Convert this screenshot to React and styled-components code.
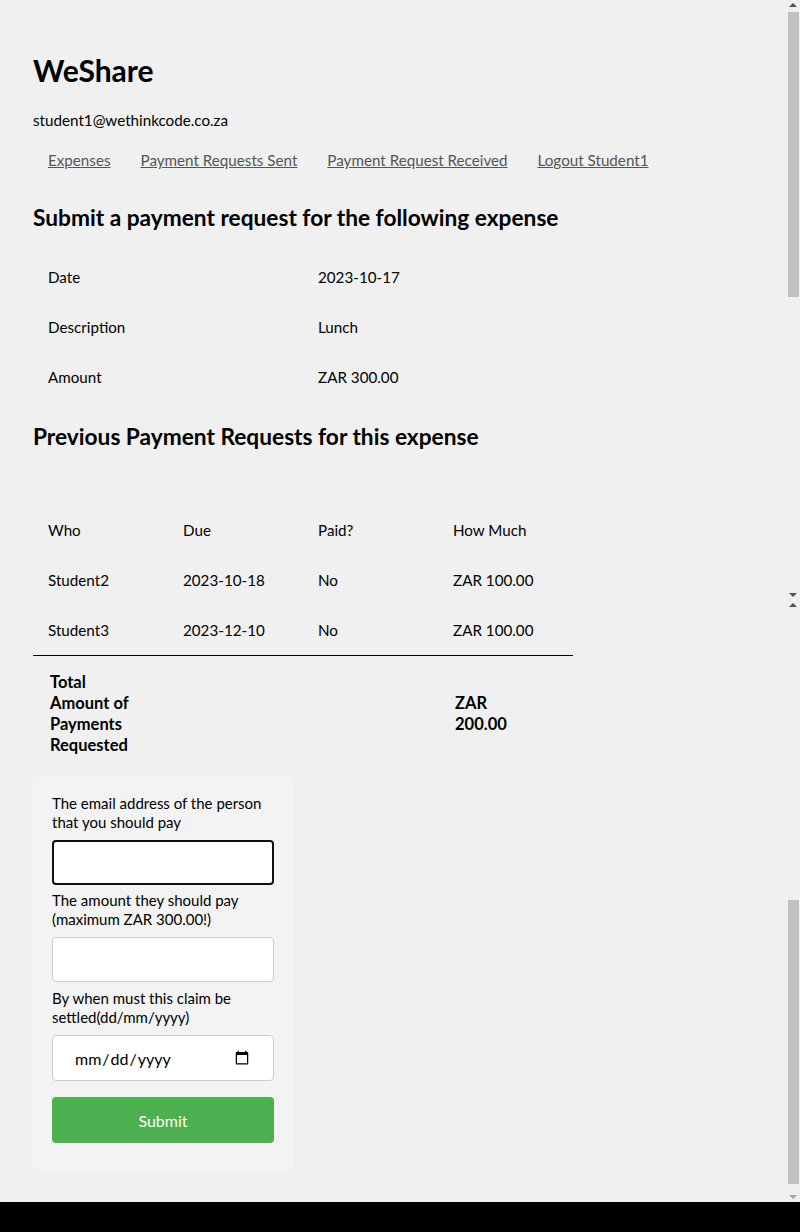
import React from 'react';
import styled, { createGlobalStyle } from 'styled-components';

const GlobalStyle = createGlobalStyle`
  html {
    background: #000;
  }
  body {
    margin: 0;
    font-family: Lato, "Noto Sans", sans-serif;
    color: #000;
  }
`;

const Page = styled.div`
  display: flex;
  height: 1202px;
  background: #f0f0f0;
`;

const Main = styled.main`
  flex: 1;
  padding: 0 33px;
`;

const Title = styled.h1`
  margin: 50px 0 20px;
  font-size: 30px;
  line-height: 40px;
  font-weight: 700;
`;

const UserEmail = styled.div`
  font-size: 15.2px;
  line-height: 20px;
  margin-bottom: 20px;
`;

const Nav = styled.nav`
  display: flex;
  margin-bottom: 33px;
`;

const NavLink = styled.a`
  padding: 0 15px;
  font-size: 15.2px;
  line-height: 20px;
  color: #555;
  text-decoration: underline;
`;

const Heading = styled.h2`
  margin: ${(p) => p.$top || '0'} 0 20px;
  font-size: 22.7px;
  line-height: 29px;
  font-weight: 700;
`;

const Table = styled.table`
  width: 540px;
  border-collapse: collapse;
  margin-top: ${(p) => p.$top || '0'};
  table-layout: fixed;

  td,
  th {
    padding: 15px;
    font-size: 15.2px;
    line-height: 20px;
    font-weight: 400;
    text-align: left;
    vertical-align: middle;
  }
`;

const FootRow = styled.tr`
  border-top: 1px solid #000;

  && td {
    padding: 16px 17px 15px;
    font-size: 16.5px;
    line-height: 21px;
    font-weight: 700;
  }
`;

const Wrap = styled.div`
  width: ${(p) => p.$w};
`;

const Card = styled.form`
  width: 262px;
  box-sizing: border-box;
  margin: 5px 0 0 -1px;
  padding: 18px 20px 28px;
  background: #f3f3f3;
  border-radius: 8px;
`;

const Label = styled.label`
  display: block;
  font-size: 15px;
  line-height: 19px;
  margin-bottom: 8px;
`;

const Input = styled.input`
  display: block;
  width: 100%;
  box-sizing: border-box;
  height: ${(p) => (p.type === 'date' ? '46px' : '45px')};
  margin-bottom: ${(p) => p.$mb || '6px'};
  padding: 0 ${(p) => (p.type === 'date' ? '21px' : '12px')};
  background: #fff;
  border: ${(p) => (p.$focused ? '2px solid #111' : '1px solid #ccc')};
  border-radius: 4px;
  font-family: inherit;
  font-size: 16px;
  color: #000;
  outline: none;
`;

const SubmitButton = styled.button`
  display: block;
  width: 100%;
  height: 46px;
  border: none;
  border-radius: 4px;
  background: #4caf50;
  color: #fff;
  font-family: inherit;
  font-size: 16px;
`;

const Rail = styled.div`
  width: 14px;
  display: flex;
  flex-direction: column;
`;

const RailPart = styled.div`
  height: ${(p) => p.$h}px;
  display: flex;
  flex-direction: column;
  align-items: center;
`;

const Arrow = styled.div`
  width: 0;
  height: 0;
  margin: 3px 0;
  border-left: 4px solid transparent;
  border-right: 4px solid transparent;
  ${(p) =>
    p.$up
      ? `border-bottom: 4px solid ${p.$dim ? '#a3a3a3' : '#505050'};`
      : `border-top: 4px solid ${p.$dim ? '#a3a3a3' : '#505050'};`}
`;

const Gap = styled.div`
  height: ${(p) => p.$h}px;
`;

const Thumb = styled.div`
  width: 11px;
  height: ${(p) => p.$h}px;
  background: #c1c1c1;
`;

const Fill = styled.div`
  flex: 1;
`;

const expense = [
  ['Date', '2023-10-17'],
  ['Description', 'Lunch'],
  ['Amount', 'ZAR 300.00'],
];

const requests = [
  ['Student2', '2023-10-18', 'No', 'ZAR 100.00'],
  ['Student3', '2023-12-10', 'No', 'ZAR 100.00'],
];

export default function App() {
  return (
    <>
      <GlobalStyle />
      <Page>
        <Main>
          <Title>WeShare</Title>
          <UserEmail>student1@wethinkcode.co.za</UserEmail>
          <Nav>
            <NavLink href="#">Expenses</NavLink>
            <NavLink href="#">Payment Requests Sent</NavLink>
            <NavLink href="#">Payment Request Received</NavLink>
            <NavLink href="#">Logout Student1</NavLink>
          </Nav>

          <Heading>Submit a payment request for the following expense</Heading>
          <Table>
            <tbody>
              {expense.map(([k, v]) => (
                <tr key={k}>
                  <td>{k}</td>
                  <td>{v}</td>
                </tr>
              ))}
            </tbody>
          </Table>

          <Heading $top="20px">Previous Payment Requests for this expense</Heading>
          <Table $top="54px">
            <thead>
              <tr>
                <th>Who</th>
                <th>Due</th>
                <th>Paid?</th>
                <th>How Much</th>
              </tr>
            </thead>
            <tbody>
              {requests.map((r) => (
                <tr key={r[0]}>
                  {r.map((c, i) => (
                    <td key={i}>{c}</td>
                  ))}
                </tr>
              ))}
            </tbody>
            <tfoot>
              <FootRow>
                <td>
                  <Wrap $w="90px">Total Amount of Payments Requested</Wrap>
                </td>
                <td />
                <td />
                <td>
                  <Wrap $w="60px">ZAR 200.00</Wrap>
                </td>
              </FootRow>
            </tfoot>
          </Table>

          <Card onSubmit={(e) => e.preventDefault()}>
            <Label>The email address of the person that you should pay</Label>
            <Input type="email" $focused />
            <Label>The amount they should pay (maximum ZAR 300.00!)</Label>
            <Input type="number" $mb="7px" />
            <Label>By when must this claim be settled(dd/mm/yyyy)</Label>
            <Input type="date" $mb="16px" />
            <SubmitButton type="submit">Submit</SubmitButton>
          </Card>
        </Main>

        <Rail>
          <RailPart $h={600}>
            <Arrow $up />
            <Gap $h={2} />
            <Thumb $h={285} />
            <Fill />
            <Arrow />
          </RailPart>
          <RailPart $h={602}>
            <Arrow $up />
            <Gap $h={290} />
            <Thumb $h={284} />
            <Fill />
            <Arrow $dim />
          </RailPart>
        </Rail>
      </Page>
    </>
  );
}
